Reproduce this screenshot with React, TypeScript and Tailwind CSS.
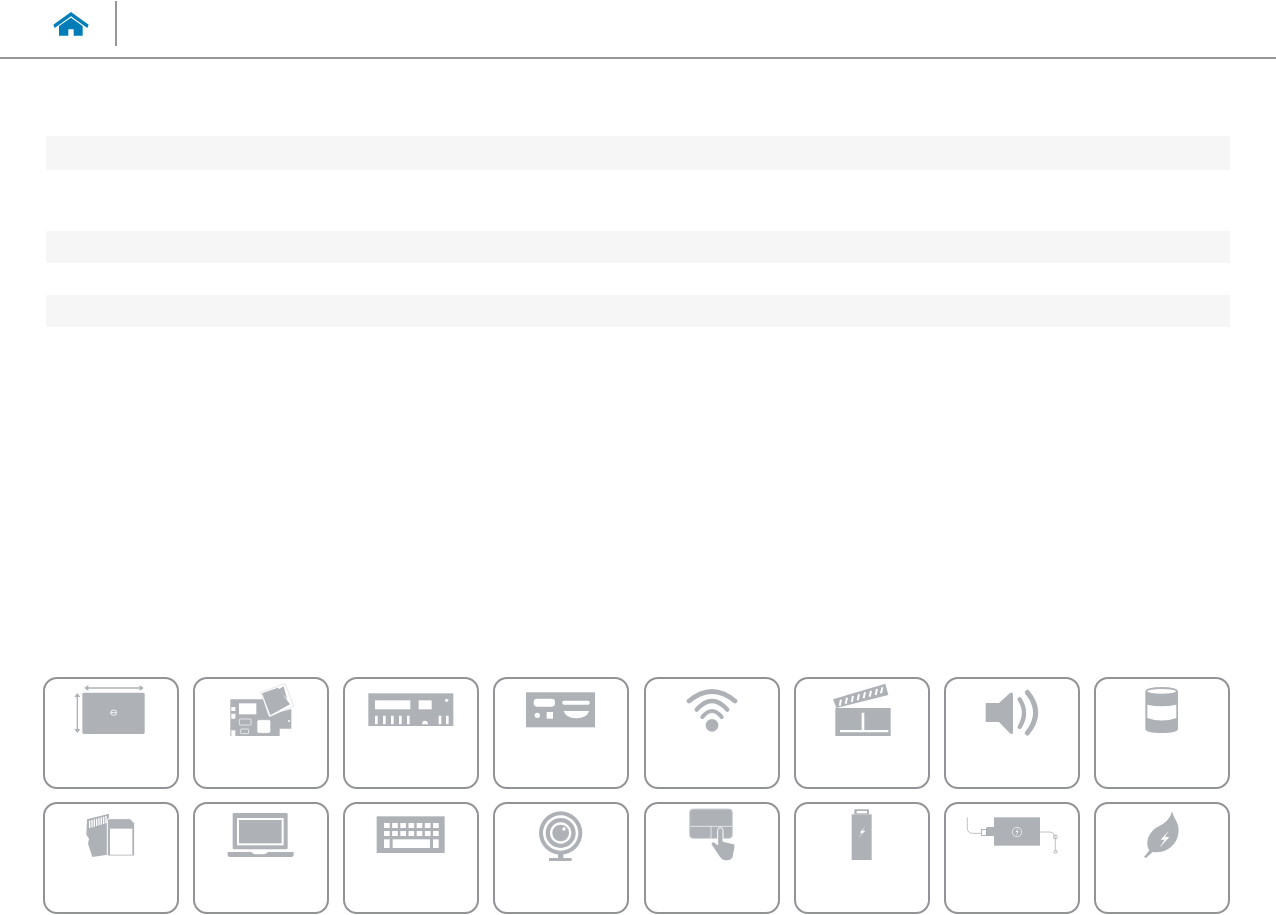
import React, { ReactNode } from 'react';

const G = '#aeb2b7';
const W = '#ffffff';

// icon coords are 3x, measured from the card's top-left corner (see viewBox)
const Tile: React.FC<{ ox: number; children: ReactNode }> = ({ ox, children }) => (
  <div className="h-[112px] rounded-[14px] border-2 border-[#929396] bg-white overflow-hidden">
    <svg className="block" width="132" height="80" viewBox={`${ox + 6} 26 396 240`} fill={G}>
      {children}
    </svg>
  </div>
);

const Dimensions = () => (
  <Tile ox={40}>
    <rect x="158" y="67" width="187" height="124" rx="5" />
    <ellipse cx="252" cy="127" rx="9" ry="8" fill="none" stroke={W} strokeWidth="2.5" />
    <path d="M244 127h16" stroke={W} strokeWidth="2.5" />
    <path d="M168 53h170" stroke={G} strokeWidth="4" />
    <path d="M176 44l-12 9 12 9zM330 44l12 9-12 9z" />
    <path d="M143 72v112" stroke={G} strokeWidth="4" />
    <path d="M134 80l9-12 9 12zM134 176l9 12 9-12z" />
  </Tile>
);

const Board = () => (
  <Tile ox={490}>
    <path d="M602 87H700L716 135L785 116V175H750V197H602Z" />
    <path d="M605 110h12v12h-12zM605 130h12v15h-12zM605 180h12v17h-12z" fill={W} />
    <rect x="628" y="99" width="52" height="33" fill={W} />
    <rect x="629" y="146" width="35" height="18" rx="3" fill="none" stroke={W} strokeWidth="2" />
    <rect x="633" y="176" width="24" height="14" rx="2" fill="none" stroke={W} strokeWidth="2" />
    <rect x="684" y="150" width="37" height="37" rx="3" fill={W} stroke={W} strokeWidth="3" strokeDasharray="3 2" />
    <circle cx="778" cy="152" r="3" fill={W} />
    <path d="M693 66L766 40L792 107L719 141Z" fill={W} stroke={G} strokeWidth="1" />
    <path d="M697 69L745 52L781 102L722 135Z" />
    <path d="M745 58L762 48L772 85Z" />
  </Tile>
);

const PortsLeft = () => (
  <Tile ox={10}>
    <rect x="86" y="69" width="255" height="98" />
    <g fill={W}>
      <rect x="106" y="90" width="106" height="27" />
      <rect x="237" y="90" width="39" height="27" />
      <circle cx="321" cy="90" r="5" />
      <path d="M106 136h8v26h-8zM130 136h8v26h-8zM154 136h8v26h-8zM178 136h8v26h-8zM202 136h8v26h-8zM297 136h8v26h-8zM319 136h8v26h-8z" />
      <path d="M247 162a9 11 0 0 1 18 0z" />
    </g>
  </Tile>
);

const PortsRight = () => (
  <Tile ox={462}>
    <rect x="561" y="66" width="207" height="105" />
    <g fill={W}>
      <rect x="584" y="85" width="64" height="24" rx="10" />
      <rect x="670" y="91" width="82" height="12" rx="5" />
      <circle cx="595" cy="135" r="8" />
      <rect x="623" y="125" width="19" height="20" />
      <path d="M674 122H750Q745 143 712 144Q680 143 674 122Z" />
    </g>
  </Tile>
);

const Wifi = () => (
  <Tile ox={12}>
    <circle cx="216" cy="165" r="19" />
    <g fill="none" stroke={G} strokeLinecap="round">
      <path d="M147 92Q216 35 285 92" strokeWidth="14" />
      <path d="M170 118Q216 66 262 118" strokeWidth="13" />
      <path d="M187 140Q216 104 245 140" strokeWidth="12" />
    </g>
  </Tile>
);

const Clapper = () => (
  <Tile ox={463}>
    <rect x="587" y="113" width="166" height="84" />
    <path d="M601 179h145v7H601zM666 127h8v53h-8z" fill={W} />
    <path d="M580 87L737 40L746 74L590 113Z" />
    <path
      d="M604 88l-4 18M622 82l-4 18M640 77l-4 18M658 72l-4 18M676 66l-4 18M694 61l-4 18M712 56l-4 18M728 51l-4 18"
      stroke={W}
      strokeWidth="6"
    />
  </Tile>
);

const Speaker = () => (
  <Tile ox={13}>
    <path d="M138 98H178L210 69Q220 62 220 74V184Q220 195 210 188L178 155H138Z" />
    <g fill="none" stroke={G} strokeLinecap="round">
      <path d="M240 87Q266 127 240 170" strokeWidth="13" />
      <path d="M263 66Q313 127 263 188" strokeWidth="15" />
    </g>
  </Tile>
);

const Drive = () => (
  <Tile ox={464}>
    <path d="M618 64Q620 50 667 50Q714 50 716 64V176Q714 188 667 188Q620 188 618 176Z" />
    <ellipse cx="667" cy="63" rx="43" ry="7" fill={W} />
    <path d="M624 103Q667 113 711 103V143Q667 158 624 143Z" fill={W} />
  </Tile>
);

const Cards = () => (
  <Tile ox={40}>
    <path d="M172 72L238 55L234 178L188 185L175 145L178 130L170 118Z" />
    <path
      d="M180 76v22M187 74v22M194 72v22M201 70v22M208 68v22M215 66v22M222 64v22M229 62v22"
      stroke={W}
      strokeWidth="4"
    />
    <path d="M233 76Q233 70 240 70H302L315 84V182H233Z" stroke={W} strokeWidth="3" />
    <rect x="241" y="100" width="67" height="78" fill={W} />
  </Tile>
);

const Laptop = () => (
  <Tile ox={490}>
    <rect x="609" y="53" width="165" height="109" rx="4" />
    <rect x="625" y="71" width="134" height="76" fill="none" stroke={W} strokeWidth="6" />
    <path d="M594 170H665Q670 177 680 177H700Q710 177 715 170H792V178Q792 185 782 185H604Q594 185 594 178Z" />
  </Tile>
);

const Keyboard = () => (
  <Tile ox={10}>
    <rect x="111" y="63" width="204" height="110" />
    <g fill={W}>
      {[133, 157.5, 182, 206.5, 231, 255.5, 280].map((x) => (
        <React.Fragment key={x}>
          <rect x={x} y="83" width="17" height="15" />
          <rect x={x} y="107" width="17" height="15" />
        </React.Fragment>
      ))}
      <rect x="133" y="132" width="17" height="26" />
      <rect x="159" y="132" width="112" height="26" />
      <rect x="280" y="132" width="17" height="26" />
    </g>
  </Tile>
);

const Webcam = () => (
  <Tile ox={462}>
    <rect x="657" y="170" width="16" height="20" />
    <rect x="630" y="188" width="68" height="9" />
    <circle cx="665" cy="113" r="65" />
    <circle cx="665" cy="113" r="53" fill={W} />
    <circle cx="665" cy="113" r="45" />
    <circle cx="665" cy="113" r="32" fill={W} />
    <circle cx="665" cy="113" r="25" />
    <circle cx="675" cy="101" r="5" fill={W} />
  </Tile>
);

const Touchpad = () => (
  <Tile ox={12}>
    <rect x="149" y="41" width="128" height="88" rx="10" stroke="#cdd0d3" strokeWidth="3" />
    <path d="M150 93H276M213 93V129" stroke={W} strokeWidth="2" fill="none" />
    <path
      d="M233 105Q233 97 241 97Q249 97 249 105V138L280 145Q286 147 285 155L279 186Q274 197 258 197Q248 197 240 187L214 148Q212 138 222 140L233 148Z"
      stroke={W}
      strokeWidth="3"
    />
  </Tile>
);

const Battery = () => (
  <Tile ox={463}>
    <rect x="644" y="42" width="44" height="15" />
    <rect x="651" y="47" width="31" height="7" fill={W} />
    <rect x="636" y="57" width="60" height="137" />
    <path d="M677 93L660 112H668L655 128L677 106H668Z" fill={W} />
  </Tile>
);

const Adapter = () => (
  <Tile ox={13}>
    <rect x="163" y="66" width="138" height="85" />
    <rect x="140" y="95" width="23" height="27" />
    <rect x="125" y="102" width="15" height="18" fill="none" stroke="#8f9296" strokeWidth="2" />
    <circle cx="232" cy="110" r="14" fill="none" stroke={W} strokeWidth="2" />
    <path d="M236 98L228 110H233L228 122L237 108H232Z" fill={W} />
    <g fill="none" stroke="#a2a6ab" strokeWidth="2">
      <path d="M83 66V98Q83 114 100 114H125" />
      <path d="M301 110H330Q347 112 347 128V166" />
      <path d="M342 120H352V130H342ZM343 166H352V173H343Z" />
    </g>
  </Tile>
);

const Leaf = () => (
  <Tile ox={464}>
    <path d="M698 48C706 75 722 85 717 115C712 150 680 175 640 170L620 188L614 185L630 165C615 140 630 105 660 92C680 82 692 70 698 48Z" />
    <path d="M688 107L664 133H676L660 158L690 125H677Z" fill={W} />
  </Tile>
);

const HomeIcon = () => (
  <svg width="36" height="24" viewBox="159 36 108 72" fill="#007db8">
    <path d="M213 36L266 74L262 84L213 49L164 84L160 74Z" />
    <path d="M213 53L248 78V107H221V88H205V107H177V78Z" />
  </svg>
);

const tiles = [
  Dimensions, Board, PortsLeft, PortsRight, Wifi, Clapper, Speaker, Drive,
  Cards, Laptop, Keyboard, Webcam, Touchpad, Battery, Adapter, Leaf,
];

export default function App() {
  return (
    <div className="w-full h-[915px] bg-white overflow-hidden font-['Liberation_Sans',sans-serif]">
      {/* top bar */}
      <header className="h-[59px] border-b-2 border-[#97979b] pl-[53px] flex items-start">
        <div className="mt-[12px]">
          <HomeIcon />
        </div>
        <div className="ml-[26px] mt-px h-[45px] w-[2px] bg-[#97979b]" />
      </header>

      {/* empty table rows */}
      <section className="px-[46px] flex flex-col">
        <div className="mt-[77px] h-[34px] bg-[#f6f6f6]" />
        <div className="mt-[61px] h-[32px] bg-[#f6f6f6]" />
        <div className="mt-[32px] h-[32px] bg-[#f6f6f6]" />
      </section>

      {/* feature tiles */}
      <nav className="mt-[350px] pl-[43px] pr-[46px] grid grid-cols-8 gap-x-[14.28px] gap-y-[13px]">
        {tiles.map((T, i) => (
          <T key={i} />
        ))}
      </nav>
    </div>
  );
}
